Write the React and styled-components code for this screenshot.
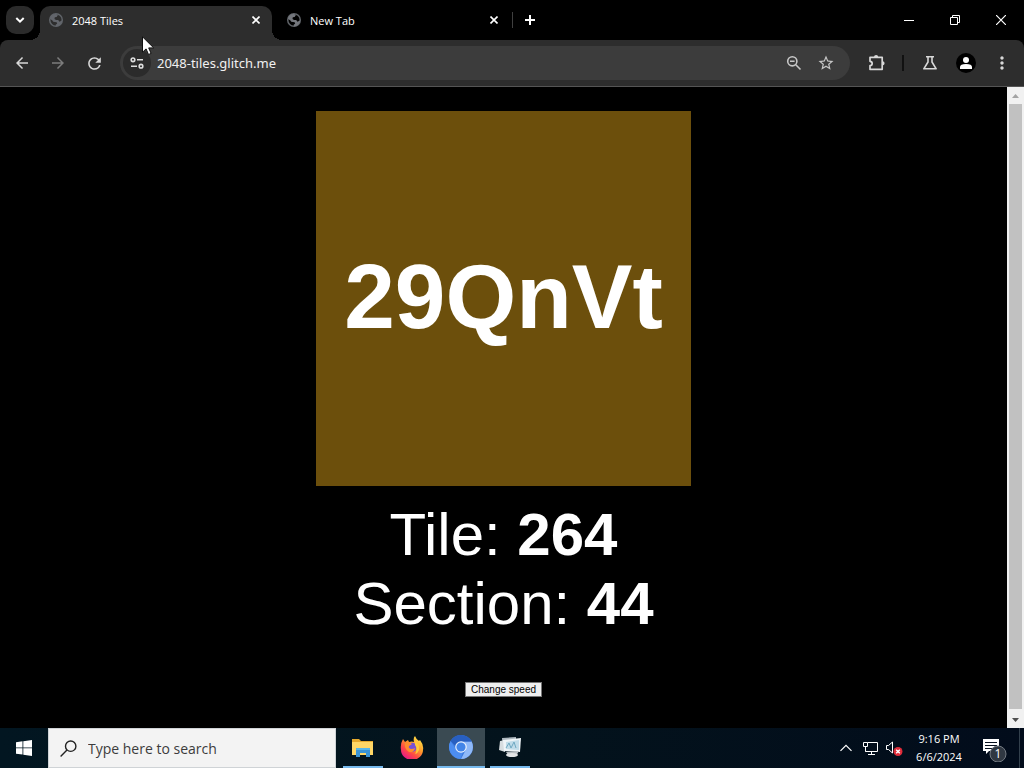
import React from "react";
import styled, { createGlobalStyle } from "styled-components";
import { MdArrowBack, MdArrowForward, MdRefresh, MdStarBorder, MdMoreVert } from "react-icons/md";

const GlobalStyle = createGlobalStyle`
  * { box-sizing: border-box; }
  body { margin: 0; background: #000; }
  button { padding: 0; border: 0; background: none; color: inherit; font: inherit; }
`;

const ui = `"Open Sans", "Noto Sans", sans-serif`;

const Screen = styled.div`
  position: relative;
  display: flex;
  flex-direction: column;
  min-height: 100vh;
  background: #000;
  color: #fff;
  font-family: ${ui};
  overflow: hidden;
`;

const TabStrip = styled.header`
  display: flex;
  align-items: flex-end;
  height: 40px;
  padding-left: 6px;
`;

const TabSearch = styled.button`
  display: grid;
  place-items: center;
  width: 28px;
  height: 28px;
  margin: 0 6px 6px 0;
  border-radius: 10px;
  background: #2b2b2b;
`;

const Tab = styled.div`
  position: relative;
  display: flex;
  align-items: center;
  gap: 8px;
  width: ${(p) => (p.$active ? 232 : 240)}px;
  height: 34px;
  padding: 0 ${(p) => (p.$active ? 9 : 11)}px 6px ${(p) => (p.$active ? 8 : 14)}px;
  border-radius: 10px 10px 0 0;
  background: ${(p) => (p.$active ? "#2d2d2d" : "transparent")};

  svg { flex: none; }

  &::before,
  &::after {
    content: "";
    display: ${(p) => (p.$active ? "block" : "none")};
    position: absolute;
    bottom: 0;
    width: 10px;
    height: 10px;
  }
  &::before {
    left: -10px;
    background: radial-gradient(circle at 0 0, transparent 10px, #2d2d2d 10px);
  }
  &::after {
    right: -10px;
    background: radial-gradient(circle at 100% 0, transparent 10px, #2d2d2d 10px);
  }
`;

const TabTitle = styled.span`
  flex: 1;
  padding-top: 1px;
  font-size: 11px;
  line-height: 16px;
`;

const TabClose = styled.button`
  display: grid;
  place-items: center;
  width: 14px;
  height: 16px;
`;

const StripDivider = styled.span`
  width: 1px;
  height: 16px;
  margin-bottom: 12px;
  background: #3f3f3f;
`;

const NewTab = styled.button`
  display: grid;
  place-items: center;
  width: 28px;
  height: 28px;
  margin: 0 0 6px 3px;
`;

const WindowControls = styled.div`
  display: flex;
  align-self: stretch;
  margin-left: auto;
`;

const WindowButton = styled.button`
  display: grid;
  place-items: center;
  width: 46px;
`;

const Toolbar = styled.nav`
  display: flex;
  align-items: center;
  height: 47px;
  padding: 0 4px;
  border-bottom: 1px solid #555;
  border-radius: 8px 8px 0 0;
  background: #2d2d2d;
`;

const ToolButton = styled.button`
  display: grid;
  place-items: center;
  width: 36px;
  height: 34px;
  color: ${(p) => (p.$dim ? "#7c7c7c" : "#d8d8d8")};
`;

const Omnibox = styled.div`
  display: flex;
  flex: 1;
  align-items: center;
  height: 34px;
  margin: 0 9px 0 8px;
  padding: 0 8px 0 3px;
  border-radius: 17px;
  background: #3c3c3c;
`;

const SiteInfo = styled.button`
  display: grid;
  place-items: center;
  width: 28px;
  height: 28px;
  margin-right: 6px;
  border-radius: 50%;
  background: #2b2b2b;
`;

const Address = styled.input`
  flex: 1;
  min-width: 0;
  height: 24px;
  padding: 0;
  border: 0;
  outline: 0;
  background: transparent;
  color: #f1f1f1;
  font-family: "Noto Sans", sans-serif;
  font-size: 13px;
`;

const OmniButton = styled.button`
  display: grid;
  place-items: center;
  width: 32px;
  height: 28px;
  color: #c7c7c7;
`;

const ToolDivider = styled.span`
  width: 2px;
  height: 16px;
  margin: 0 8px 0 7px;
  background: #111;
`;

const Avatar = styled.span`
  display: grid;
  place-items: center;
  width: 20px;
  height: 20px;
  border-radius: 50%;
  background: #000;
`;

const Viewport = styled.div`
  display: flex;
  flex: 1;
`;

const Page = styled.main`
  display: flex;
  flex: 1;
  flex-direction: column;
  align-items: center;
  padding-top: 24px;
  font-family: "Liberation Sans", Arial, sans-serif;
`;

const TileCard = styled.div`
  display: grid;
  place-items: center;
  width: 375px;
  height: 375px;
  margin-bottom: 14px;
  padding-bottom: 4px;
  background: #6c4f0c;
  font-size: 91px;
  font-weight: 700;
  line-height: 104px;
`;

const Stat = styled.p`
  margin: 0;
  font-size: 60px;
  line-height: 69px;
`;

const SpeedButton = styled.button`
  width: 77px;
  height: 15px;
  margin-top: 44px;
  border: 1px solid #767676;
  background: #efefef;
  color: #000;
  font-size: 10px;
  line-height: 12px;
  white-space: nowrap;
`;

const Scrollbar = styled.div`
  display: flex;
  flex-direction: column;
  width: 17px;
  background: #f1f1f1;
`;

const ScrollArrow = styled.button`
  display: grid;
  place-items: center;
  height: 17px;
  color: ${(p) => (p.$dim ? "#a3a3a3" : "#505050")};
`;

const ScrollThumb = styled.div`
  flex: 1;
  margin: 0 2px 2px;
  background: #c1c1c1;
`;

const Taskbar = styled.footer`
  display: flex;
  align-items: stretch;
  height: 40px;
  background: linear-gradient(90deg, #021621, #03131c 50%, #020c1b);
`;

const StartButton = styled.button`
  display: grid;
  place-items: center;
  width: 48px;
`;

const SearchBox = styled.label`
  display: flex;
  align-items: center;
  gap: 11px;
  width: 288px;
  margin-right: 3px;
  padding-left: 11px;
  border: 1px solid #cfd3d6;
  background: #f3f3f3;
`;

const SearchInput = styled.input`
  flex: 1;
  min-width: 0;
  padding: 0;
  border: 0;
  outline: 0;
  background: transparent;
  font-family: ${ui};
  font-size: 14px;
  &::placeholder { color: #3c3c3c; opacity: 1; }
`;

const AppButton = styled.button`
  display: flex;
  flex-direction: column;
  align-items: center;
  width: 48px;
  margin-right: 1px;
  background: ${(p) => (p.$active ? "#3a4a52" : "transparent")};

  svg { margin: 7px 0; }

  &::after {
    content: "";
    width: ${(p) => (p.$active ? 48 : 40)}px;
    height: 2px;
    background: ${(p) => (p.$running ? "#76b9ed" : "transparent")};
  }
`;

const Tray = styled.div`
  display: flex;
  align-items: center;
  margin-left: auto;
`;

const TrayButton = styled.button`
  display: grid;
  place-items: center;
  width: 24px;
  height: 40px;
`;

const Clock = styled.time`
  width: 64px;
  margin: 0 1px;
  font-size: 11px;
  line-height: 18px;
  text-align: center;
  white-space: nowrap;
`;

const ActionCenter = styled.button`
  display: grid;
  place-items: center;
  width: 48px;
  height: 40px;
  padding: 2px 3px 0 0;
  border-right: 1px solid #33404c;
  margin-right: 4px;
`;

const Pointer = styled.svg`
  position: absolute;
  left: 142px;
  top: 36px;
`;

const line = { fill: "none", stroke: "currentColor" };

function CloseIcon() {
  return (
    <svg width="8" height="8" viewBox="0 0 8 8" {...line} strokeWidth="1.6">
      <path d="M0.5 0.5l7 7M7.5 0.5l-7 7" />
    </svg>
  );
}

function GlobeIcon({ land }) {
  return (
    <svg width="16" height="16" viewBox="0 0 16 16">
      <circle cx="8" cy="8" r="6.3" fill="none" stroke="#5f6368" strokeWidth="1.5" />
      <path d="M2 7C2.200 4 4.500 2 8 1.700L9.800 3.200 8.600 5 6.800 5.300 6.500 7 8 8H10.200L11.500 9.800 13.800 8.500 14.200 9.500C13.300 12.500 11 14.200 8.300 14.400L7.500 13 9.200 11.600 8.600 10.200 5.200 9.800 4.200 8.200z" fill={land} />
    </svg>
  );
}

function BrowserTab({ title, active }) {
  return (
    <Tab $active={active}>
      <GlobeIcon land={active ? "#62656b" : "#74777d"} />
      <TabTitle>{title}</TabTitle>
      <TabClose aria-label={`Close ${title}`}><CloseIcon /></TabClose>
    </Tab>
  );
}

function SiteIcon() {
  return (
    <svg width="14" height="12" viewBox="0 0 14 12" {...line} stroke="#dedede" strokeWidth="1.6">
      <circle cx="3" cy="2.8" r="1.8" />
      <path d="M7 2.8h6M1 9.2h6" />
      <circle cx="11" cy="9.2" r="1.8" />
    </svg>
  );
}

function ZoomIcon() {
  return (
    <svg width="16" height="16" viewBox="0 0 16 16" {...line} strokeWidth="1.6">
      <circle cx="6.3" cy="6.3" r="4.6" />
      <path d="M4 6.3h4.6M9.8 9.8l4.7 4.7" />
    </svg>
  );
}

function PuzzleIcon() {
  return (
    <svg width="20" height="20" viewBox="0 0 20 20" {...line} strokeWidth="1.7" strokeLinejoin="round">
      <path d="M3 4.3h12.2v4.2v7.8H3v-3.6c2.9-.2 2.9-4.2 0-4.4z" />
      <path d="M7 4a2.1 2.1 0 0 1 4.2 0zM15.500 8.200a2.100 2.100 0 0 1 0 4.200z" fill="currentColor" stroke="none" />
    </svg>
  );
}

function FlaskIcon() {
  return (
    <svg width="16" height="16" viewBox="0 0 16 16" {...line} strokeWidth="1.6" strokeLinejoin="round">
      <path d="M4 1.8h8M6 2v5L1.8 13.8h12.4L10 7V2" />
    </svg>
  );
}

function ExplorerIcon() {
  return (
    <svg width="24" height="24" viewBox="0 0 24 24">
      <path d="M1 4h7l2 2h12v14H1z" fill="#e6a92d" />
      <path d="M1 7h21v13H1z" fill="#ffd766" />
      <path d="M5 22v-8q0-1 1-1h12q1 0 1 1v8h-4v-4H9v4z" fill="#3a93d4" />
      <path d="M5 14q0-1 1-1h12q1 0 1 1v1H5z" fill="#58b7e9" />
    </svg>
  );
}

function FirefoxIcon() {
  return (
    <svg width="24" height="24" viewBox="0 0 24 24">
      <defs>
        <linearGradient id="fox" x1="0.85" y1="0.05" x2="0.2" y2="0.95">
          <stop offset="0" stopColor="#ffe84a" />
          <stop offset="0.4" stopColor="#ff9a2b" />
          <stop offset="0.7" stopColor="#ff4747" />
          <stop offset="1" stopColor="#e3178b" />
        </linearGradient>
      </defs>
      <path d="M3 4l2 3 3-2 1 2q3-1 5 0Q13 3 15 1q1 3 4 5l1-1q4 5 3 10a11 10 0 0 1-22 0Q0 9 3 4z" fill="url(#fox)" />
      <circle cx="12.2" cy="12.3" r="4.6" fill="#7650d4" />
      <path d="M5 8q4-2 7 1l-3 2q-1 2 2 3 3 0 4-1-1 5-6 4-5-3-4-9z" fill="#ff8c2e" />
      <path d="M15 6q5 3 4 9-1 3-4 4 3-5 0-9z" fill="#ffca38" />
    </svg>
  );
}

function ChromiumIcon() {
  return (
    <svg width="24" height="24" viewBox="0 0 24 24">
      <circle cx="12" cy="12" r="12" fill="#3b79dc" />
      <path d="M12 6.5h10.6A12 12 0 0 1 12 24l4.8-9.2z" fill="#8fb9f8" />
      <path d="M1.6 6L7.2 14.8Q9.5 18 14 17.2L11.4 24A12 12 0 0 1 1.6 6z" fill="#4c8df0" />
      <path d="M1.6 6A12 12 0 0 1 22.6 6.5H12Q8 6.7 6.5 11z" fill="#285fc0" />
      <circle cx="12" cy="12" r="5.8" fill="#e8f0fd" />
      <circle cx="12" cy="12" r="4.6" fill="#4285e8" />
    </svg>
  );
}

function MonitorIcon() {
  return (
    <svg width="24" height="24" viewBox="0 0 24 24">
      <path d="M4 3l14-1v13l-13 1z" fill="#aeb8bf" />
      <path d="M2 6l5-1v12l-6-2z" fill="#d7dde0" />
      <path d="M5 5l18-2-1 14-16-1z" fill="#eef4f7" />
      <path d="M8 7l13-2v10l-13-1z" fill="#c0dce9" />
      <path d="M8 13l3-5 2 5 3-6 2 6" fill="none" stroke="#6fa9c2" />
      <path d="M8 17l13-1-3 5-8-1z" fill="#b9bfc3" />
      <ellipse cx="14" cy="20" rx="6" ry="2" fill="#e3e5e6" />
    </svg>
  );
}

export default function App() {
  return (
    <Screen>
      <GlobalStyle />
      <TabStrip>
        <TabSearch aria-label="Search tabs">
          <svg width="10" height="8" viewBox="0 0 10 8" {...line} strokeWidth="2"><path d="M1.3 2L5 5.7 8.7 2" /></svg>
        </TabSearch>
        <BrowserTab title="2048 Tiles" active />
        <BrowserTab title="New Tab" />
        <StripDivider />
        <NewTab aria-label="New tab">
          <svg width="12" height="12" viewBox="0 0 12 12" {...line} strokeWidth="2"><path d="M6 1v10M1 6h10" /></svg>
        </NewTab>
        <WindowControls>
          <WindowButton aria-label="Minimize">
            <svg width="10" height="10" viewBox="0 0 10 10" {...line}><path d="M0 5.5h10" /></svg>
          </WindowButton>
          <WindowButton aria-label="Restore">
            <svg width="10" height="10" viewBox="0 0 10 10" {...line}><path d="M0.5 2.5h7v7h-7zM2.5 2.5v-2h7v7h-2" /></svg>
          </WindowButton>
          <WindowButton aria-label="Close window">
            <svg width="10" height="10" viewBox="0 0 10 10" {...line} strokeWidth="1.2"><path d="M0 0l10 10M10 0L0 10" /></svg>
          </WindowButton>
        </WindowControls>
      </TabStrip>

      <Toolbar>
        <ToolButton aria-label="Back"><MdArrowBack size={18} /></ToolButton>
        <ToolButton aria-label="Forward" $dim><MdArrowForward size={18} /></ToolButton>
        <ToolButton aria-label="Reload"><MdRefresh size={19} /></ToolButton>
        <Omnibox>
          <SiteInfo aria-label="Site information"><SiteIcon /></SiteInfo>
          <Address aria-label="Address" defaultValue="2048-tiles.glitch.me" />
          <OmniButton aria-label="Zoom"><ZoomIcon /></OmniButton>
          <OmniButton aria-label="Bookmark"><MdStarBorder size={18} /></OmniButton>
        </Omnibox>
        <ToolButton aria-label="Extensions"><PuzzleIcon /></ToolButton>
        <ToolDivider />
        <ToolButton aria-label="Labs"><FlaskIcon /></ToolButton>
        <ToolButton aria-label="Profile">
          <Avatar>
            <svg width="12" height="12" viewBox="0 0 12 12" fill="#fff"><circle cx="6" cy="3" r="3" /><path d="M0 12v-2q0-3 6-3t6 3v2z" /></svg>
          </Avatar>
        </ToolButton>
        <ToolButton aria-label="Menu"><MdMoreVert size={20} /></ToolButton>
      </Toolbar>

      <Viewport>
        <Page>
          <TileCard>29QnVt</TileCard>
          <Stat>Tile: <b>264</b></Stat>
          <Stat>Section: <b>44</b></Stat>
          <SpeedButton>Change speed</SpeedButton>
        </Page>
        <Scrollbar>
          <ScrollArrow aria-label="Scroll up" $dim>
            <svg width="7" height="4" viewBox="0 0 7 4" fill="currentColor"><path d="M0 4l3.5-4L7 4z" /></svg>
          </ScrollArrow>
          <ScrollThumb />
          <ScrollArrow aria-label="Scroll down">
            <svg width="7" height="4" viewBox="0 0 7 4" fill="currentColor"><path d="M0 0l3.5 4L7 0z" /></svg>
          </ScrollArrow>
        </Scrollbar>
      </Viewport>

      <Taskbar>
        <StartButton aria-label="Start">
          <svg width="16" height="16" viewBox="0 0 16 16" fill="#fff"><path d="M0 2.2l6.5-.9v6.2H0zM7.3 1.2L16 0v7.5H7.3zM0 8.3h6.5v6.2L0 13.700zM7.300 8.300H16V16l-8.700-1.200z" /></svg>
        </StartButton>
        <SearchBox>
          <svg width="17" height="17" viewBox="0 0 17 17" fill="none" stroke="#222" strokeWidth="1.4"><circle cx="10.7" cy="6.2" r="5.2" /><path d="M7 10L0.6 16.4" /></svg>
          <SearchInput aria-label="Search" placeholder="Type here to search" />
        </SearchBox>
        <AppButton aria-label="File Explorer" $running><ExplorerIcon /></AppButton>
        <AppButton aria-label="Firefox"><FirefoxIcon /></AppButton>
        <AppButton aria-label="Chromium" $running $active><ChromiumIcon /></AppButton>
        <AppButton aria-label="System monitor" $running><MonitorIcon /></AppButton>
        <Tray>
          <TrayButton aria-label="Show hidden icons">
            <svg width="12" height="8" viewBox="0 0 12 8" {...line} strokeWidth="1.2"><path d="M0.5 6.8L6 1.3l5.500 5.500" /></svg>
          </TrayButton>
          <TrayButton aria-label="Network">
            <svg width="17" height="14" viewBox="0 0 17 14" {...line}><path d="M5.5 1.5h10v9h-12v-3M9.500 10.500v3M6 13.500h7M1.500 1.500h4v4h-4zM3.500 5.500v5" /></svg>
          </TrayButton>
          <TrayButton aria-label="Volume muted">
            <svg width="17" height="15" viewBox="0 0 17 15" {...line}>
              <path d="M0.5 4.5h2l4-3.500v11l-4-3.500h-2z" />
              <circle cx="12" cy="10.500" r="4.500" fill="#e02c3a" stroke="none" />
              <path d="M10.200 8.700l3.600 3.600M13.800 8.700l-3.600 3.600" strokeWidth="1.4" />
            </svg>
          </TrayButton>
          <Clock>9:16 PM<br />6/6/2024</Clock>
          <ActionCenter aria-label="Notifications">
            <svg width="26" height="26" viewBox="0 0 26 26">
              <path d="M2 3h16v12H8l-3 3v-3H2z" fill="#fff" />
              <path d="M4 6.500h12M4 9.500h12M4 12.500h8" stroke="#07111f" />
              <circle cx="17" cy="18" r="8" fill="#303842" stroke="#737a82" />
              <text x="17" y="22" fill="#fff" fontFamily="Open Sans, sans-serif" fontSize="12" textAnchor="middle">1</text>
            </svg>
          </ActionCenter>
        </Tray>
      </Taskbar>

      <Pointer width="13" height="20" viewBox="0 0 13 20" aria-hidden="true">
        <path d="M0.5 0.8v15.400l3.600-3.300 2.400 5.600 2.600-1.100-2.400-5.500h5z" fill="#fff" stroke="#111" />
      </Pointer>
    </Screen>
  );
}
